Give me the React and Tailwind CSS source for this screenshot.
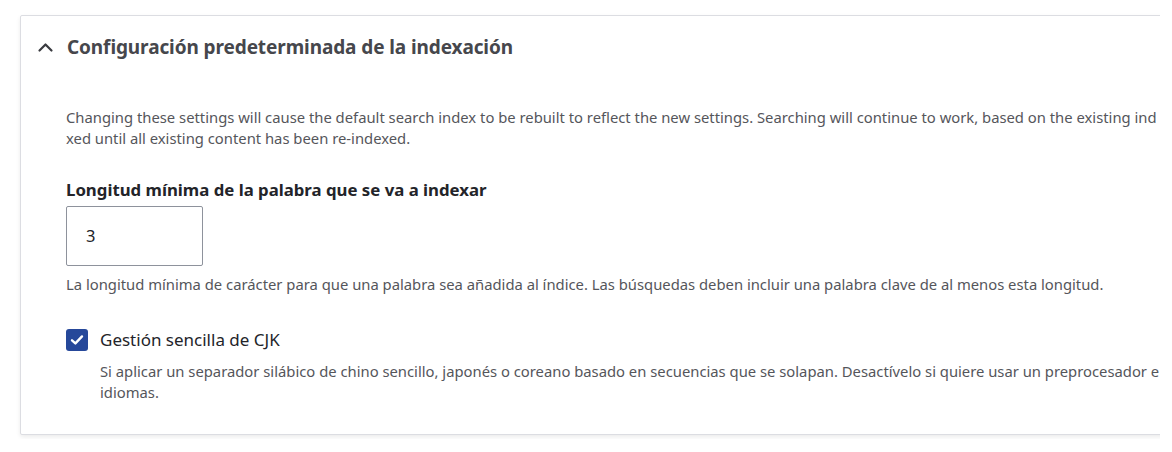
export default function App() {
  const font = { fontFamily: '"Noto Sans", "Open Sans", sans-serif' };
  return (
    <div className="w-[1172px] h-[452px] bg-white overflow-hidden" style={font}>
      <div className="pt-[15px] pl-[20px] w-[1160px] overflow-hidden pb-[4px]">
        <div className="w-[1200px] h-[420px] bg-white border border-[#dcdde2] rounded-l-[2px] shadow-[0_2px_4px_rgba(0,0,0,0.08)] overflow-hidden">
          <div className="flex items-center h-[62px] pl-[16px]">
            <svg width="17" height="17" viewBox="0 0 17 17" className="mr-[13px]">
              <path d="M2.5 11.5 L8.5 5.5 L14.5 11.5" fill="none" stroke="#3a3b40" strokeWidth="2.2" strokeLinecap="round" strokeLinejoin="round" />
            </svg>
            <span className="text-[19px] font-bold text-[#46474c] tracking-[-0.1px]">Configuración predeterminada de la indexación</span>
          </div>
          <div className="pl-[45px] pt-[29px]">
            <div className="text-[14.8px] leading-[21px] text-[#55565b] whitespace-nowrap">
              <div>Changing these settings will cause the default search index to be rebuilt to reflect the new settings. Searching will continue to work, based on the existing ind</div>
              <div>xed until all existing content has been re-indexed.</div>
            </div>
            <div className="mt-[30px] text-[16.8px] font-bold text-[#232429] leading-[22px]">Longitud mínima de la palabra que se va a indexar</div>
            <div className="mt-[5px] w-[137px] h-[60px] border border-[#8e929c] rounded-[2px] flex items-center pl-[19px] text-[16.5px] text-[#232429]">3</div>
            <div className="mt-[8px] text-[14.8px] leading-[21px] text-[#55565b] whitespace-nowrap">La longitud mínima de carácter para que una palabra sea añadida al índice. Las búsquedas deben incluir una palabra clave de al menos esta longitud.</div>
            <div className="mt-[34px] flex items-center h-[22px]">
              <div className="w-[22px] h-[22px] rounded-[3px] bg-[#26489a] flex items-center justify-center">
                <svg width="16" height="16" viewBox="0 0 16 16">
                  <path d="M3 8.3 L6.4 11.4 L13 4.4" fill="none" stroke="white" strokeWidth="2.4" strokeLinecap="round" strokeLinejoin="round" />
                </svg>
              </div>
              <span className="ml-[12px] text-[17px] text-[#232429]">Gestión sencilla de CJK</span>
            </div>
            <div className="pl-[34px] mt-[10px] text-[14.8px] leading-[21px] text-[#55565b] whitespace-nowrap">
              <div>Si aplicar un separador silábico de chino sencillo, japonés o coreano basado en secuencias que se solapan. Desactívelo si quiere usar un preprocesador e</div>
              <div>idiomas.</div>
            </div>
          </div>
        </div>
      </div>
    </div>
  );
}
